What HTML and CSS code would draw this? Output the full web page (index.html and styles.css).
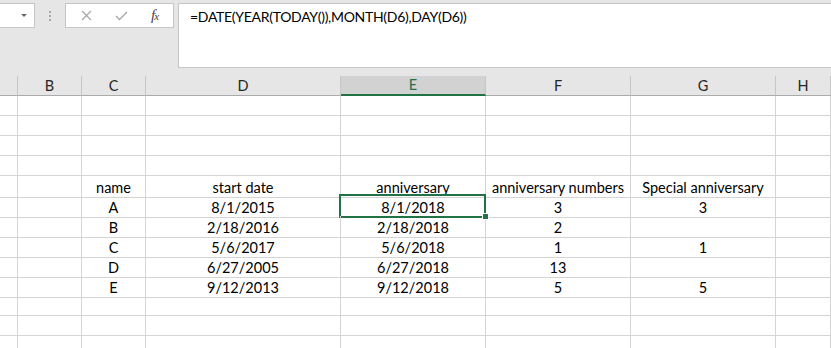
FILE: index.html
```html
<!DOCTYPE html>
<html lang="en">
<head>
  <meta charset="UTF-8">
  <title>Anniversary sheet</title>
  <link rel="stylesheet" href="styles.css">
</head>
<body>
  <div class="toolbar">
    <div class="name-box">
      <span class="drop-arrow"></span>
    </div>
    <div class="grip">
      <span></span><span></span><span></span>
    </div>
    <div class="fx-buttons">
      <svg class="fx-cancel" width="11" height="11" viewBox="0 0 11 11">
        <path d="M1 1 L10 10 M10 1 L1 10" stroke="#a8a8a8" stroke-width="1.3" fill="none"/>
      </svg>
      <svg class="fx-enter" width="13" height="10" viewBox="0 0 13 10">
        <path d="M1 5 L4.5 8.5 L12 1" stroke="#a8a8a8" stroke-width="1.4" fill="none"/>
      </svg>
      <span class="fx-label">f<sub>x</sub></span>
    </div>
    <div class="formula">=DATE(YEAR(TODAY()),MONTH(D6),DAY(D6))</div>
  </div>

  <div class="sheet">
    <div class="row col-heads">
      <div class="cell"></div>
      <div class="cell">B</div>
      <div class="cell">C</div>
      <div class="cell">D</div>
      <div class="cell active">E</div>
      <div class="cell">F</div>
      <div class="cell">G</div>
      <div class="cell">H</div>
    </div>
    <div id="rows"></div>
  </div>

  <script>
    const sheetData = [
      [],
      [],
      [],
      [],
      ['', '', 'name', 'start date', 'anniversary', 'anniversary numbers', 'Special anniversary', ''],
      ['', '', 'A', '8/1/2015', '8/1/2018', '3', '3', ''],
      ['', '', 'B', '2/18/2016', '2/18/2018', '2', '', ''],
      ['', '', 'C', '5/6/2017', '5/6/2018', '1', '1', ''],
      ['', '', 'D', '6/27/2005', '6/27/2018', '13', '', ''],
      ['', '', 'E', '9/12/2013', '9/12/2018', '5', '5', ''],
      [],
      [],
      []
    ];

    const rowsEl = document.getElementById('rows');
    sheetData.forEach((cells, r) => {
      const row = document.createElement('div');
      row.className = 'row';
      for (let c = 0; c < 8; c++) {
        const cell = document.createElement('div');
        cell.className = 'cell';
        cell.textContent = cells[c] || '';
        // E6 is the selected cell
        if (r === 5 && c === 4) cell.classList.add('selected');
        row.appendChild(cell);
      }
      rowsEl.appendChild(row);
    });
  </script>
</body>
</html>
```

FILE: styles.css
```css
body {
  margin: 0;
  padding: 0;
  background: #fff;
  font-family: Lato, 'Liberation Sans', sans-serif;
  font-size: 14.5px;
  color: #000;
  overflow: hidden;
}

/* formula bar */
.toolbar {
  display: flex;
  align-items: flex-start;
  background: #e6e6e6;
  padding-top: 3px;
  height: 76px;
  box-sizing: border-box;
}
.name-box {
  width: 35px;
  height: 25px;
  box-sizing: border-box;
  background: #fff;
  border: 1px solid #c6c6c6;
  border-left: none;
  position: relative;
}
.drop-arrow {
  position: absolute;
  left: 21px;
  top: 10px;
  width: 0;
  height: 0;
  border-left: 3px solid transparent;
  border-right: 3px solid transparent;
  border-top: 3px solid #6a6a6a;
}
.grip {
  width: 30px;
  display: flex;
  flex-direction: column;
  align-items: center;
  gap: 2px;
  padding-top: 8px;
}
.grip span {
  width: 2px;
  height: 2px;
  background: #a6a6a6;
}
.fx-buttons {
  width: 109px;
  height: 25px;
  box-sizing: border-box;
  background: #fff;
  border: 1px solid #c6c6c6;
  display: flex;
  align-items: center;
  padding-left: 15px;
}
.fx-cancel {
  margin-right: 23px;
}
.fx-enter {
  margin-right: 23px;
}
.fx-label {
  font-family: 'Liberation Serif', serif;
  font-style: italic;
  font-size: 15px;
  color: #444;
  line-height: 1;
}
.fx-label sub {
  font-size: 11px;
  vertical-align: 0;
  margin-left: -1px;
}
.formula {
  flex: 1;
  margin-left: 4px;
  height: 65px;
  box-sizing: border-box;
  background: #fff;
  border: 1px solid #c6c6c6;
  border-right: none;
  padding: 4px 0 0 11px;
  white-space: nowrap;
  font-size: 14px;
  letter-spacing: -0.3px;
}

/* grid */
.row {
  display: grid;
  grid-template-columns: 18px 64px 64px 195px 145px 145px 145px 1fr;
  height: 20px;
}
.cell {
  box-sizing: border-box;
  border-right: 1px solid #d4d4d4;
  border-bottom: 1px solid #d4d4d4;
  text-align: center;
  line-height: 19px;
  padding-top: 2px;
  white-space: nowrap;
  position: relative;
}
.col-heads {
  background: #e6e6e6;
}
.col-heads .cell {
  padding-top: 0;
  border-right-color: #c6c6c6;
  border-bottom-color: #ababab;
  color: #262626;
}
.col-heads .cell.active {
  background: #d2d2d2;
  color: #217346;
  border-bottom: 2px solid #217346;
  line-height: 18px;
}
.cell.selected::after {
  content: '';
  position: absolute;
  top: -2px;
  left: -2px;
  right: -1px;
  bottom: -1px;
  border: 2px solid #217346;
}
.cell.selected::before {
  content: '';
  position: absolute;
  right: -3px;
  bottom: -2px;
  width: 5px;
  height: 5px;
  background: #217346;
  outline: 1px solid #fff;
  z-index: 1;
}
```
